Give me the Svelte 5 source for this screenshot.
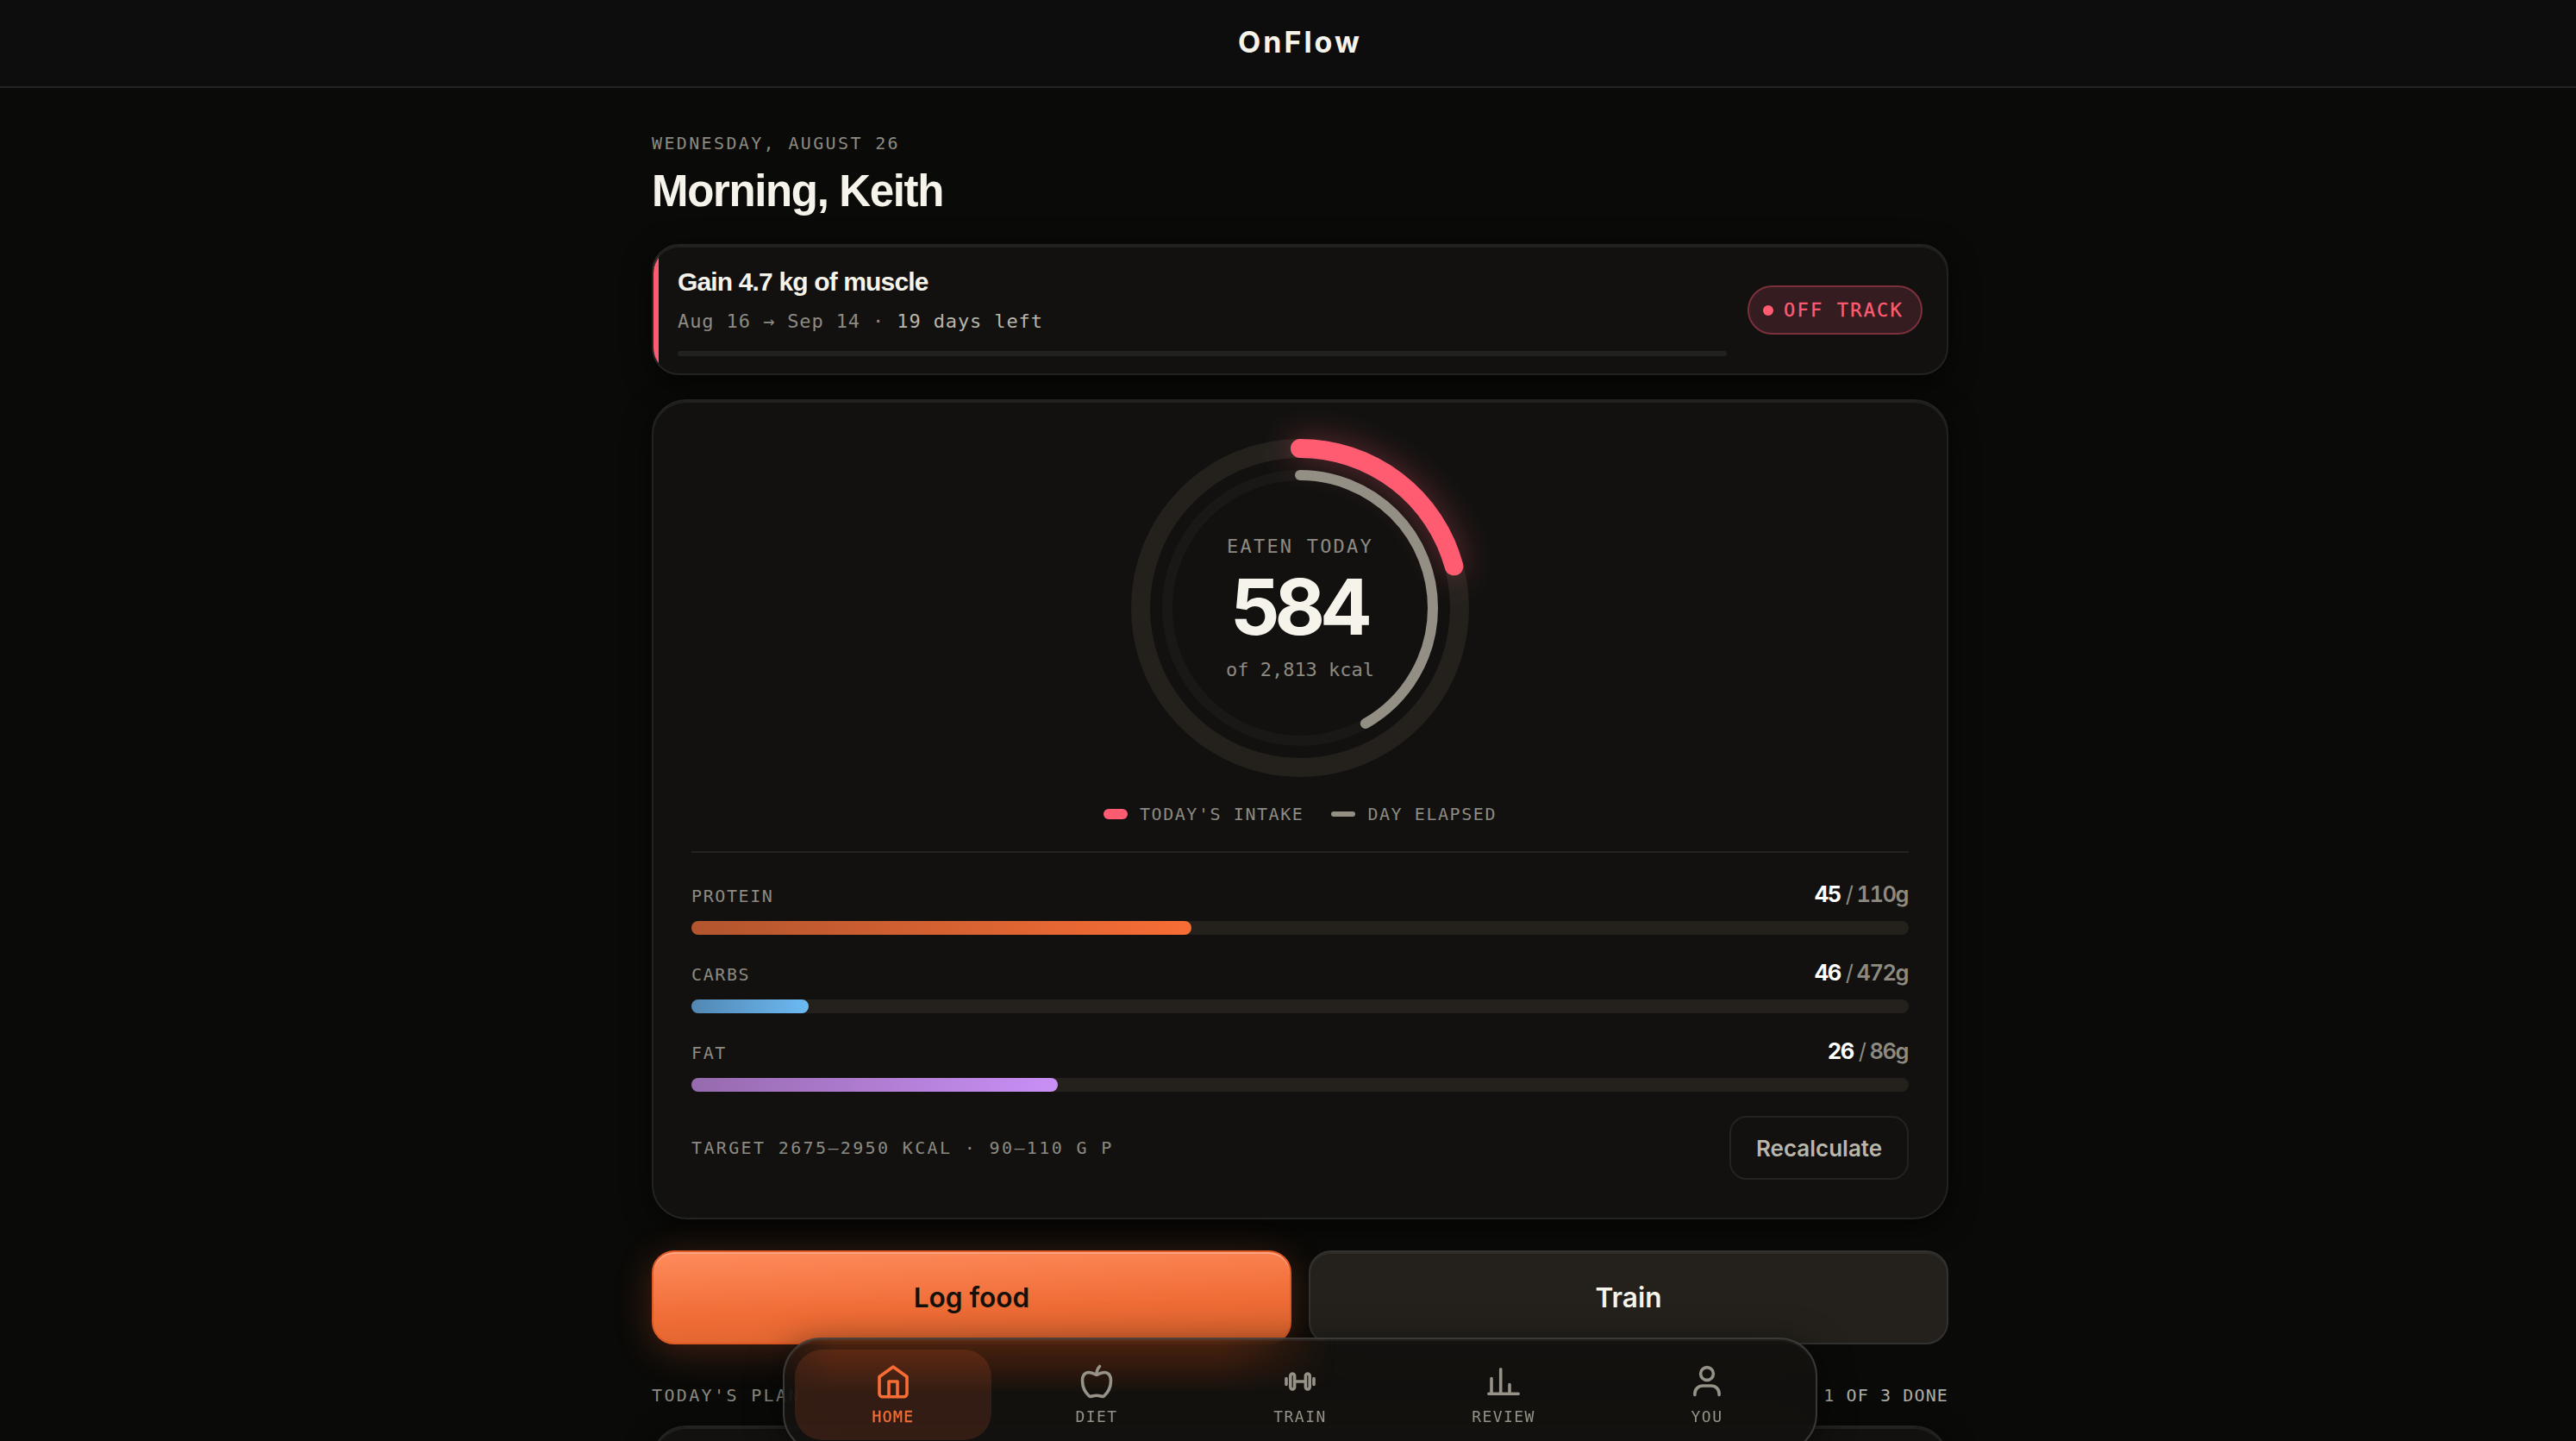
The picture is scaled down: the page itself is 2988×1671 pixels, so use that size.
<script>
  const macros = [
    { name: 'Protein', value: 45, target: 110, width: 41.05, tone: 'protein' },
    { name: 'Carbs', value: 46, target: 472, width: 9.63, tone: 'carbs' },
    { name: 'Fat', value: 26, target: 86, width: 30.1, tone: 'fat' },
  ];

  const tabs = ['Home', 'Diet', 'Train', 'Review', 'You'];
  let active = $state('Home');

  const eaten = 584;
  const goal = 2813;
  const dayElapsed = 0.4178;
  const outer = 2 * Math.PI * 185;
  const inner = 2 * Math.PI * 154;
</script>

{#snippet icon(name)}
  <svg class="icon" viewBox="0 0 44 44">
    {#if name === 'Home'}
      <path d="M22 5 6 16.5V36a3.7 3.7 0 0 0 3.7 3.7h24.6A3.7 3.7 0 0 0 38 36V16.5z" />
      <path d="M17 39.5V22h10v17.5" />
    {:else if name === 'Diet'}
      <path d="M22 14.3c-4-2-6.5-2.8-9-2.8-5.5 0-7.5 4.5-7.5 9.5 0 7 3.5 14 8 18 2.5 1.5 5.5-1.5 8.5-.7 3-.8 6 2.2 8.5.7 4.5-4 8-11 8-18 0-5-2-9.5-7.5-9.5-2.5 0-5 .8-9 2.8z" />
      <path d="M22 14c0-4 1-7 3.500-9.500" />
    {:else if name === 'Train'}
      <rect x="10.8" y="13" width="4.8" height="18" rx="2.4" />
      <rect x="28.4" y="13" width="4.8" height="18" rx="2.4" />
      <path d="M15.6 22h12.8M6 18.5v7M38 18.5v7" />
    {:else if name === 'Review'}
      <path d="M4.8 36.2h34.4M8 36V18.5M18.7 36V7.8M29 36V25.5" />
    {:else}
      <circle cx="22" cy="13" r="7.4" />
      <path d="M7.9 37.500v-1.500a9 9 0 0 1 9-9h10.200a9 9 0 0 1 9 9v1.500" />
    {/if}
  </svg>
{/snippet}

<div class="page">
  <header>
    <span class="brand">OnFlow</span>
  </header>

  <main>
    <p class="label date">Wednesday, August 26</p>
    <h1>Morning, Keith</h1>

    <section class="card goal">
      <div class="goal-body">
        <h2>Gain 4.7 kg of muscle</h2>
        <p class="range">Aug 16 → Sep 14 · <span>19 days left</span></p>
        <div class="goal-track"></div>
      </div>
      <div class="badge"><i></i>OFF TRACK</div>
    </section>

    <section class="card today">
      <div class="ring">
        <svg viewBox="0 0 392 392">
          <circle class="track" cx="196" cy="196" r="185" />
          <circle class="track-inner" cx="196" cy="196" r="154" />
          <g transform="rotate(-90 196 196)">
            <circle class="intake" cx="196" cy="196" r="185" stroke-dasharray="{(outer * eaten) / goal} {outer}" />
            <circle class="elapsed" cx="196" cy="196" r="154" stroke-dasharray="{inner * dayElapsed} {inner}" />
          </g>
        </svg>
        <div class="ring-text">
          <span class="ring-label">EATEN TODAY</span>
          <strong>{eaten}</strong>
          <span class="ring-goal">of {goal.toLocaleString('en-US')} kcal</span>
        </div>
      </div>

      <div class="legend">
        <span class="key"><i></i>Today's intake</span>
        <span class="key day"><i></i>Day elapsed</span>
      </div>

      <div class="macros">
        {#each macros as m}
          <div class="macro">
            <div class="macro-head">
              <span class="macro-name">{m.name}</span>
              <span class="amount"><b>{m.value}</b><em>/</em>{m.target}g</span>
            </div>
            <div class="bar"><div class="fill {m.tone}" style="width: {m.width}%"></div></div>
          </div>
        {/each}
      </div>

      <div class="card-foot">
        <span class="label">Target 2675–2950 kcal · 90–110 g P</span>
        <button class="recalc">Recalculate</button>
      </div>
    </section>

    <div class="actions">
      <button class="primary">Log food</button>
      <button class="secondary">Train</button>
    </div>

    <div class="plan-head">
      <span class="label">Today's plan</span>
      <span class="done">1 of 3 done</span>
    </div>
    <section class="card plan"></section>
  </main>

  <nav>
    {#each tabs as tab}
      <button class:active={active === tab} onclick={() => (active = tab)}>
        {@render icon(tab)}
        <span>{tab}</span>
      </button>
    {/each}
  </nav>
</div>

<style>
:global(body) {
  background: #0a0a08;
  overflow: hidden;
}
.page {
  --mono: "DejaVu Sans Mono", "Liberation Mono", monospace;
  --sans: Inter, "Liberation Sans", sans-serif;
  --text: #f6f3ea;
  --muted: #8d8a82;
  --line: #232321;
  position: relative;
  box-sizing: border-box;
  height: 1671px;
  padding-left: 28px;
  overflow: hidden;
  background: #0a0a08;
  color: var(--text);
  font-family: var(--sans);
}
h1, h2, p {
  margin: 0;
}
button {
  box-sizing: border-box;
  margin: 0;
  font-family: inherit;
  cursor: pointer;
}
header {
  box-sizing: border-box;
  height: 102px;
  margin-left: -28px;
  padding-left: 28px;
  border-bottom: 2px solid #232321;
  background: #0d0d0d;
  text-align: center;
}
.brand {
  font-size: 34px;
  font-weight: 700;
  line-height: 98px;
  letter-spacing: 3px;
}
main {
  width: 1504px;
  margin: 0 auto;
  padding-top: 50px;
}
.label {
  color: var(--muted);
  font-family: var(--mono);
  font-size: 20px;
  line-height: 28px;
  letter-spacing: 0.118em;
  text-transform: uppercase;
}
h1 {
  margin-top: 12px;
  font: 700 51px/60px "Liberation Sans", sans-serif;
  letter-spacing: -1.35px;
}
.card {
  box-sizing: border-box;
  border: 2px solid var(--line);
  border-radius: 40px;
  background: #12110f;
  box-shadow: inset 0 2px 0 #21211f, 0 8px 32px rgba(0, 0, 0, 0.6);
}
.goal {
  display: flex;
  align-items: center;
  gap: 24px;
  height: 152px;
  margin-top: 31px;
  padding: 23px 28px 20px;
  border-radius: 32px;
  background: linear-gradient(90deg, #ff5c72 6px, #12110f 6px);
}
.goal-body {
  flex: 1;
}
h2 {
  font: 700 30px/38px "Liberation Sans", sans-serif;
  letter-spacing: -0.85px;
}
.range {
  margin-top: 13px;
  color: var(--muted);
  font: 22px/28px var(--mono);
  letter-spacing: 0.04em;
}
.range span {
  color: #b9b6ab;
}
.goal-track {
  height: 6px;
  margin-top: 20px;
  border-radius: 3px;
  background: #21211e;
}
.badge {
  display: flex;
  box-sizing: border-box;
  align-items: center;
  gap: 12px;
  width: 203px;
  height: 57px;
  margin-bottom: 2px;
  padding-left: 16px;
  border: 2px solid #7c303c;
  border-radius: 29px;
  background: #341c20;
  color: #ff5c72;
  font: 22px/28px var(--mono);
  letter-spacing: 2.2px;
  white-space: nowrap;
  -webkit-text-stroke: 0.3px #ff5c72;
}
.badge i {
  width: 12px;
  height: 12px;
  border-radius: 50%;
  background: #ff5c72;
}
.today {
  height: 951px;
  margin-top: 28px;
  padding: 44px;
}
.ring {
  display: grid;
  width: 392px;
  height: 392px;
  margin: 0 auto;
}
.ring svg,
.ring-text {
  grid-area: 1 / 1;
}
.ring svg {
  overflow: visible;
}
.ring circle {
  fill: none;
}
.track {
  stroke: #24211d;
  stroke-width: 22;
}
.track-inner {
  stroke: #191816;
  stroke-width: 12;
}
.intake {
  stroke: #ff5c72;
  stroke-width: 22;
  stroke-linecap: round;
  filter: drop-shadow(0 0 18px rgba(255, 92, 114, 0.4));
}
.elapsed {
  stroke: #938f84;
  stroke-width: 12;
  stroke-linecap: round;
}
.ring-text {
  display: flex;
  flex-direction: column;
  align-items: center;
  padding-top: 111px;
  font-family: var(--mono);
  color: var(--muted);
}
.ring-label {
  font-size: 22px;
  line-height: 28px;
  letter-spacing: 0.1em;
}
.ring-text strong {
  margin: 6px 3px 0 0;
  color: var(--text);
  font: 700 90px/100px var(--sans);
  letter-spacing: -6px;
}
.ring-goal {
  margin-top: 9px;
  font-size: 22px;
  line-height: 28px;
}
.legend {
  display: flex;
  justify-content: center;
  gap: 32px;
  margin-top: 29px;
}
.key {
  display: flex;
  align-items: center;
  gap: 14px;
  color: var(--muted);
  font: 20px/28px var(--mono);
  letter-spacing: 0.078em;
  text-transform: uppercase;
}
.key i {
  width: 28px;
  height: 12px;
  border-radius: 6px;
  background: #ff5c72;
}
.key.day i {
  height: 6px;
  border-radius: 3px;
  background: #938f84;
}
.macros {
  display: flex;
  flex-direction: column;
  gap: 27px;
  margin-top: 29px;
  padding-top: 31px;
  border-top: 2px solid var(--line);
}
.macro-head {
  display: flex;
  align-items: baseline;
  justify-content: space-between;
  height: 36px;
  margin-bottom: 12px;
}
.macro-name {
  color: var(--muted);
  font: 20px/32px var(--mono);
  letter-spacing: 0.08em;
  text-transform: uppercase;
}
.amount {
  margin-right: 1px;
  color: var(--muted);
  font-size: 25.5px;
  font-weight: 600;
  font-variant-numeric: tabular-nums;
  line-height: 33px;
  letter-spacing: -1.5px;
}
.amount b {
  color: #fff;
  font-weight: 700;
}
.amount em {
  margin: 0 5px 0 6px;
  font-style: normal;
  font-weight: 400;
}
.bar {
  height: 16px;
  border-radius: 8px;
  background: #24211c;
}
.fill {
  height: 100%;
  border-radius: 8px;
}
.protein {
  background: linear-gradient(90deg, #b2552e, #f76d35);
}
.carbs {
  background: linear-gradient(90deg, #5287b2, #6cbaf3);
}
.fat {
  background: linear-gradient(90deg, #966aae, #c98ff6);
}
.card-foot {
  display: flex;
  align-items: center;
  justify-content: space-between;
  margin-top: 28px;
}
.recalc {
  width: 208px;
  height: 74px;
  padding: 0;
  border: 2px solid var(--line);
  border-radius: 20px;
  background: none;
  color: #b9b6ab;
  font-size: 26px;
  font-weight: 600;
}
.actions {
  display: grid;
  grid-template-columns: 1fr 1fr;
  gap: 20px;
  margin-top: 36px;
}
.primary,
.secondary {
  height: 109px;
  border-radius: 26px;
  font-size: 31.6px;
  font-weight: 600;
}
.primary {
  border: 2px solid #df5a24;
  background: linear-gradient(178deg, #ff8b5d, #ef6c35 60%, #d9632e);
  box-shadow: inset 0 2px 0 #ffa583, 0 8px 44px rgba(255, 107, 53, 0.24);
  color: #14110a;
}
.secondary {
  border: 2px solid #33322e;
  background: #24211c;
  box-shadow: inset 0 2px 0 #2e2c28;
  color: var(--text);
}
.plan-head {
  display: flex;
  justify-content: space-between;
  margin-top: 45px;
}
.done {
  color: #b0ada3;
  font: 20px/28px var(--mono);
  letter-spacing: 0.056em;
  text-transform: uppercase;
}
.plan {
  height: 300px;
  margin-top: 21px;
}
nav {
  position: absolute;
  top: 1551px;
  left: 908px;
  display: flex;
  box-sizing: border-box;
  gap: 8px;
  width: 1200px;
  height: 133px;
  padding: 12px;
  border: 2px solid rgba(255, 255, 255, 0.17);
  border-radius: 44px;
  background: rgba(20, 18, 16, 0.82);
  box-shadow: inset 0 2px 0 rgba(255, 255, 255, 0.05), 0 8px 40px rgba(0, 0, 0, 0.5);
  backdrop-filter: blur(24px);
}
/* warm spill from the primary button behind the bar */
nav::before {
  content: "";
  position: absolute;
  inset: 0 auto auto 0;
  width: 640px;
  height: 64px;
  border-radius: 42px 0 0 0;
  background: linear-gradient(rgba(255, 90, 10, 0.2), rgba(255, 80, 10, 0.14) 40%, transparent);
  mask-image: linear-gradient(90deg, rgba(0, 0, 0, 0.3), #000 60px, #000 500px, transparent);
}
nav button {
  position: relative;
  display: flex;
  flex-direction: column;
  align-items: center;
  width: 228px;
  height: 105px;
  padding: 15px 0 0;
  border: 0;
  border-radius: 32px;
  background: none;
  color: #969288;
  font: 18px/24px var(--mono);
  letter-spacing: 0.08em;
  text-transform: uppercase;
}
nav button span {
  margin-top: 7px;
}
nav .active {
  background: rgba(255, 107, 53, 0.14);
  color: #f76d35;
}
nav .active span {
  -webkit-text-stroke: 0.3px;
}
.icon {
  width: 44px;
  height: 44px;
  fill: none;
  stroke: currentColor;
  stroke-width: 3.6;
  stroke-linecap: round;
  stroke-linejoin: round;
}
</style>
